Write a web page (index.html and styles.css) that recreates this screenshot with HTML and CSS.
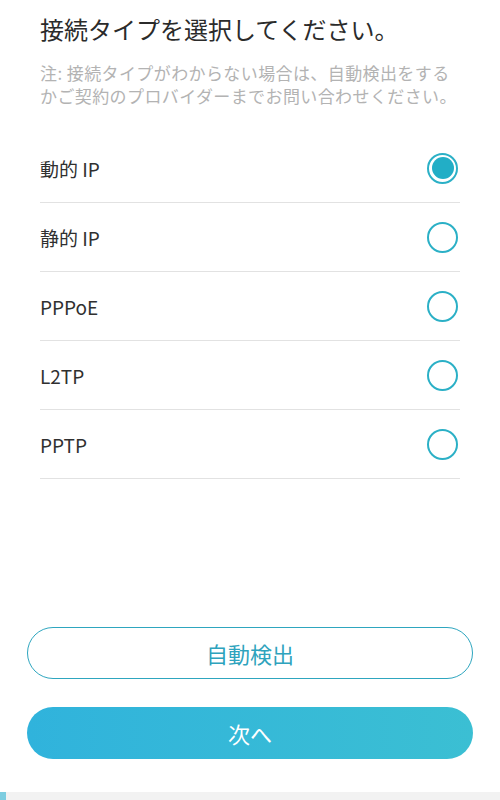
FILE: index.html
```html
<!DOCTYPE html>
<html lang="ja">
  <head>
    <meta charset="UTF-8" />
    <meta name="viewport" content="width=device-width, initial-scale=1.0" />
    <title>接続タイプ</title>
    <link rel="stylesheet" href="styles.css">
  </head>
  <body>
    <div class="page">
      <h1 class="title">接続タイプを選択してください。</h1>
      <p class="note">注: 接続タイプがわからない場合は、自動検出をする<br />かご契約のプロバイダーまでお問い合わせください。</p>

      <!-- 接続タイプ一覧 -->
      <ul class="types">
        <li class="type"><span>動的 IP</span><span class="radio checked"></span></li>
        <li class="type"><span>静的 IP</span><span class="radio"></span></li>
        <li class="type"><span>PPPoE</span><span class="radio"></span></li>
        <li class="type"><span>L2TP</span><span class="radio"></span></li>
        <li class="type"><span>PPTP</span><span class="radio"></span></li>
      </ul>

      <div class="actions">
        <button class="btn btn-outline">自動検出</button>
        <button class="btn btn-primary">次へ</button>
      </div>
    </div>
    <div class="bottom-bar"><span class="bottom-mark"></span></div>
  </body>
</html>
```

FILE: styles.css
```css
body {
  margin: 0;
  height: 100vh;
  display: flex;
  flex-direction: column;
  font-family: "Noto Sans CJK JP", "Noto Sans", sans-serif;
  background-color: #fff;
  color: #333;
}

.page {
  flex: 1;
  display: flex;
  flex-direction: column;
}

.title {
  margin: 12px 40px 0;
  font-size: 24px;
  font-weight: normal;
  line-height: 34px;
  color: #2b2b2b;
}

.note {
  margin: 15px 40px 0;
  font-size: 17px;
  letter-spacing: 0.4px;
  line-height: 23px;
  color: #b3b3b3;
  white-space: nowrap;
}

.types {
  list-style: none;
  margin: 27px 40px 0;
  padding: 0;
}

.type {
  height: 68px;
  display: flex;
  align-items: center;
  justify-content: space-between;
  border-bottom: 1px solid #e2e2e2;
  font-size: 19px;
  color: #303030;
}

.radio {
  box-sizing: border-box;
  width: 31px;
  height: 31px;
  margin-right: 2px;
  border: 2px solid #2bb0c6;
  border-radius: 50%;
  display: flex;
  align-items: center;
  justify-content: center;
}

.radio.checked::after {
  content: "";
  width: 22px;
  height: 22px;
  border-radius: 50%;
  background-color: #22aec6;
}

.actions {
  margin: auto 27px 0;
  padding-bottom: 33px;
  display: flex;
  flex-direction: column;
  gap: 28px;
}

.btn {
  height: 52px;
  border-radius: 26px;
  font-family: inherit;
  font-size: 22px;
  cursor: pointer;
}

.btn-outline {
  background-color: #fff;
  border: 1px solid #2ea6bf;
  color: #2ea3bd;
}

.btn-primary {
  border: none;
  color: #fff;
  background: linear-gradient(90deg, #30b3dc, #3bbfd3);
}

.bottom-bar {
  height: 8px;
  background-color: #f2f2f2;
}

.bottom-mark {
  display: block;
  width: 6px;
  height: 8px;
  background-color: #7dcde0;
}
```
